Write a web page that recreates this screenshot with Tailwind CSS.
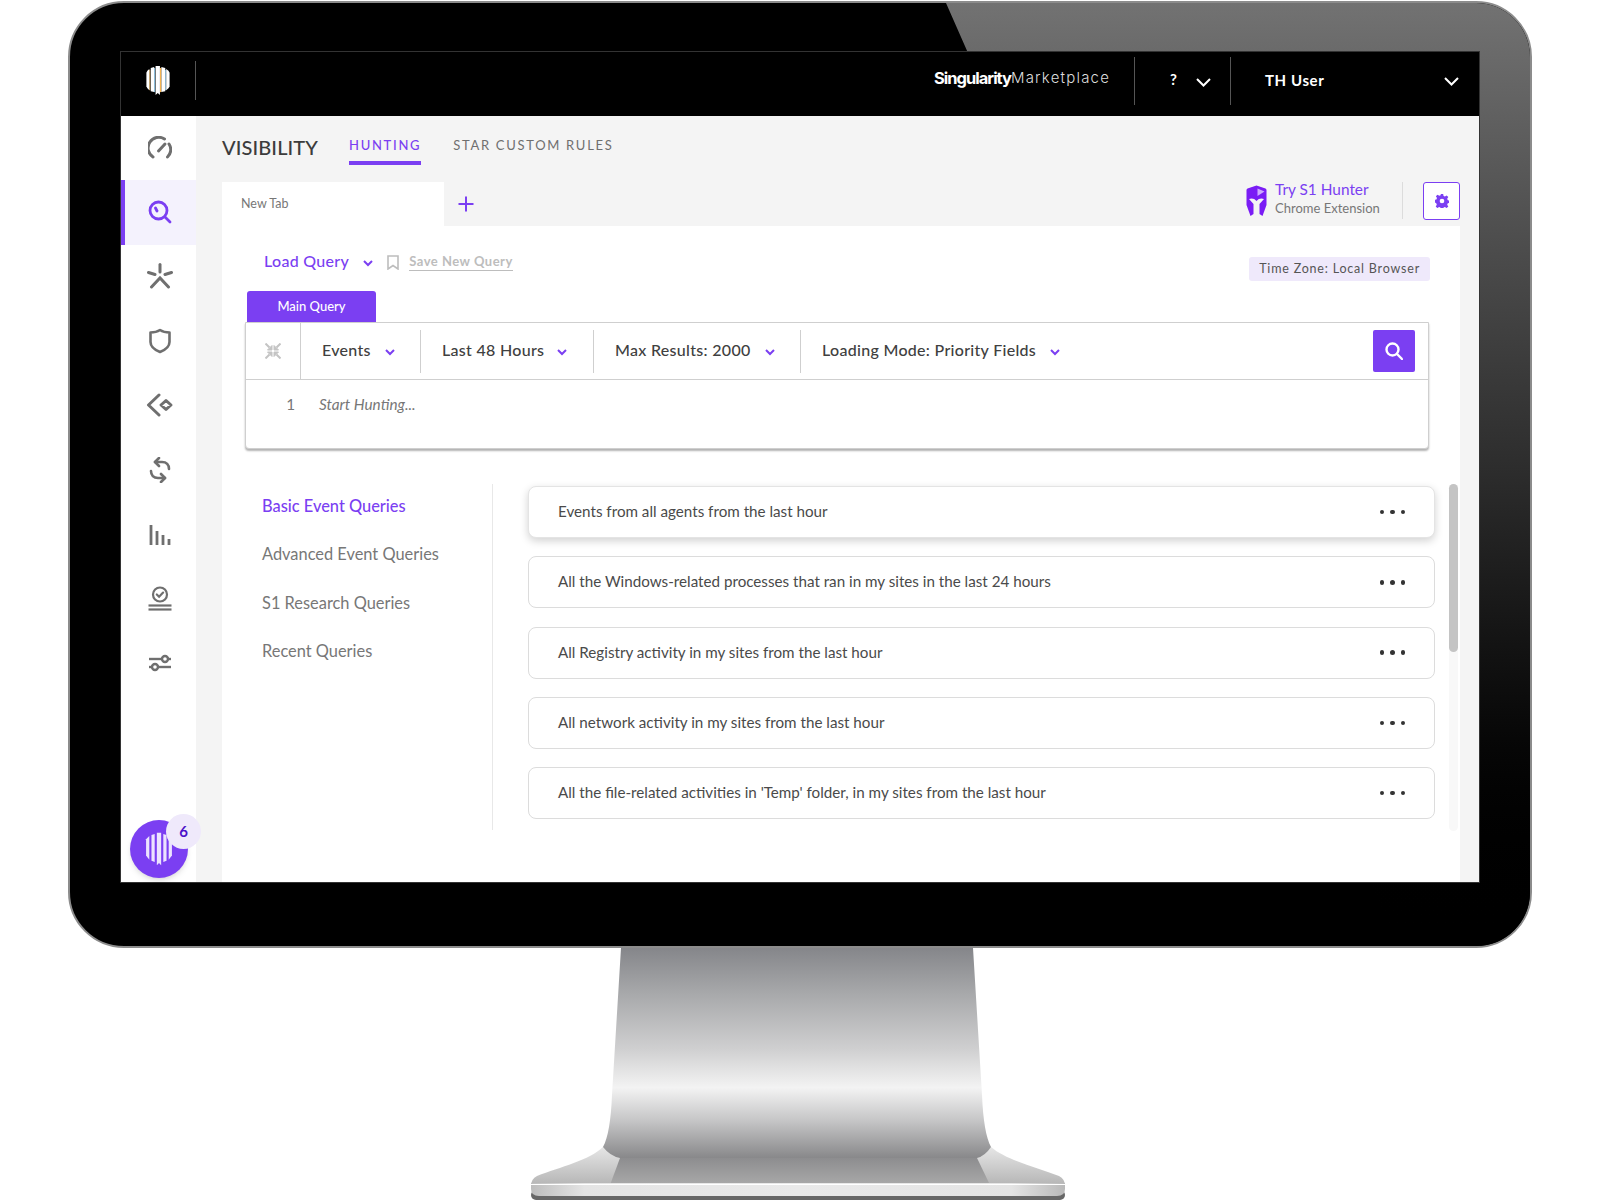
<!DOCTYPE html>
<html lang="en">
<head>
  <meta charset="UTF-8" />
  <title>Singularity Marketplace - Visibility</title>
  <script src="https://cdn.jsdelivr.net/npm/@tailwindcss/browser@4"></script>
</head>
<body class="bg-white w-[1600px] h-[1200px] overflow-hidden font-['Lato',sans-serif] text-[#4a4a4a]">

  <!-- monitor bezel -->
  <div class="relative mt-[1px] ml-[68px] w-[1464px] h-[947px] bg-black rounded-[56px] border-2 border-[#8c8c8c] pt-[49px] pl-[51px] overflow-hidden">
    <div class="absolute top-0 bottom-0 right-0 left-[876px] bg-linear-to-b from-[#727272] via-[#2c2c2c] to-black [clip-path:polygon(0_0,100%_0,100%_100%,450px_100%,425px_880px,22px_50px)]"></div>

    <!-- screen -->
    <div class="relative w-[1358px] h-[830px] flex flex-col outline outline-1 outline-[#333]">

      <!-- top bar -->
      <div class="h-[64px] bg-black flex items-center text-white shrink-0 pb-[6px]">
        <div class="w-[75px] h-[39px] flex items-center justify-center border-r border-[#555] -mt-[1px]">
          <svg width="26" height="29" viewBox="0 0 26 30" fill="#fff">
            <rect x="4" y="4" width="1" height="21" fill="#f5b550"/><rect x="9" y="2" width="1" height="25" fill="#8fd0f5"/><rect x="15" y="2" width="1.500" height="25" fill="#f5b550"/><rect x="20.500" y="4" width="1" height="21" fill="#8fd0f5"/>
            <path d="M1 7 Q1.500 4.500 4 3 V25 Q1.500 23.500 1 21 Z"/><path d="M5.500 2 L9 1 V27 L5.500 26 Z"/><path d="M10.500 0 H15 V30 L12.750 28 L10.500 30 Z"/><path d="M16.500 1 L20.500 2 V26 L16.500 27 Z"/><path d="M21.500 3 Q24.500 4.500 25 7 V21 Q24.500 23.500 21.500 25 Z"/>
          </svg>
        </div>
        <div class="ml-auto flex items-center w-[175px] mr-[25px] -mt-[5px] font-['Inter',sans-serif] whitespace-nowrap">
          <span class="font-bold text-[16.500px] tracking-[-1px]">Singularity</span><span class="font-light text-[15px] tracking-[1.200px] text-[#ddd]">Marketplace</span>
        </div>
        <div class="w-[97px] h-[48px] border-l border-r border-[#555] flex items-center pl-[35px]">
          <span class="font-bold text-[15px] -mt-[4px]">?</span>
          <svg class="ml-[19px] mt-[2px]" width="15" height="9" viewBox="0 0 15 9" fill="none" stroke="#fff" stroke-width="2"><path d="M1 1l6.500 6.500L14 1"/></svg>
        </div>
        <div class="w-[248px] flex items-center pl-[34px] pr-[20px]">
          <span class="font-bold text-[15px] tracking-[0.6px] -mt-[1px]">TH User</span>
          <svg class="ml-auto" width="15" height="9" viewBox="0 0 15 9" fill="none" stroke="#fff" stroke-width="2"><path d="M1 1l6.500 6.500L14 1"/></svg>
        </div>
      </div>

      <div class="flex flex-1 min-h-0">
        <!-- sidebar -->
        <div class="relative w-[75px] bg-white shrink-0">
          <div class="h-[64.400px] flex items-center justify-center pl-[2px]">
            <svg width="24" height="24" viewBox="0 0 24 24" fill="none" stroke="#6f6f6f" stroke-width="3" stroke-linecap="round"><path d="M5 21A10 10 0 0 1 16.500 3"/><path d="M21 8A10 10 0 0 1 19.500 21"/><path d="M10.500 15L17 8"/></svg>
          </div>
          <div class="h-[64.400px] flex items-center justify-center bg-[#f4f2fd] border-l-[4px] border-[#7b3ff2] pr-[2px]">
            <svg class="-mt-[2px]" width="24" height="24" viewBox="0 0 24 24" fill="none" stroke="#7b3ff2" stroke-width="2.800" stroke-linecap="round"><circle cx="10.500" cy="10.500" r="8.500"/><path d="M17 17l5 5"/><path d="M7.500 8l1.500 3"/></svg>
          </div>
          <div class="h-[64.400px] flex items-center justify-center pl-[2px]">
            <svg class="-mt-[1px]" width="26" height="26" viewBox="0 0 26 26" fill="none" stroke="#6f6f6f" stroke-width="3" stroke-linecap="round"><path d="M13 1.500V9"/><path d="M1.500 9.500L8 11.500"/><path d="M24.500 9.500L18 11.500"/><path d="M4.500 24L13 15l8.500 9"/></svg>
          </div>
          <div class="h-[64.400px] flex items-center justify-center pl-[2px]">
            <svg width="24" height="26" viewBox="0 0 24 26" fill="none" stroke="#6f6f6f" stroke-width="2.600" stroke-linejoin="round"><path d="M12 2C9 4 5.500 4.500 2.500 4.500V14c0 4.500 4.500 8 9.500 10 5-2 9.500-5.500 9.500-10V4.500C18.500 4.500 15 4 12 2Z"/></svg>
          </div>
          <div class="h-[64.400px] flex items-center justify-center pl-[2px]">
            <svg class="-mt-[1px]" width="28" height="24" viewBox="0 0 28 24" fill="none" stroke="#6f6f6f" stroke-width="3" stroke-linecap="round" stroke-linejoin="round"><path d="M13 2L2.500 12 13 22"/><path d="M20 7.500l5 4.500-5 4.500-5-4.500z"/></svg>
          </div>
          <div class="h-[64.400px] flex items-center justify-center pl-[2px]">
            <svg class="-mt-[1px]" width="24" height="26" viewBox="0 0 24 26" fill="none" stroke="#6f6f6f" stroke-width="2.600" stroke-linecap="round" stroke-linejoin="round"><path d="M21 12c0-4-2.500-7-7-7H7"/><path d="M11 1L7 5l4 4"/><path d="M3 14c0 4 2.500 7 7 7h7"/><path d="M13 17l4 4-4 4"/></svg>
          </div>
          <div class="h-[64.400px] flex items-center justify-center pl-[2px]">
            <svg width="22" height="22" viewBox="0 0 22 22" fill="none" stroke="#6f6f6f" stroke-width="2.800"><path d="M2 1v20"/><path d="M8 7v14"/><path d="M14 11v10"/><path d="M20 15v6"/></svg>
          </div>
          <div class="h-[64.400px] flex items-center justify-center pl-[2px]">
            <svg width="26" height="26" viewBox="0 0 26 26" fill="none" stroke="#6f6f6f" stroke-width="2.200"><circle cx="13" cy="8.500" r="7"/><path d="M9.800 8.500l2.300 2.300 4-4.200" stroke-linecap="round"/><path d="M1.500 19.500h23"/><path d="M1.500 23.500h23"/></svg>
          </div>
          <div class="h-[64.400px] flex items-center justify-center pl-[2px]">
            <svg width="24" height="20" viewBox="0 0 24 20" fill="none" stroke="#6f6f6f" stroke-width="2.400"><path d="M1 6h13"/><path d="M20 6h3"/><circle cx="17" cy="6" r="3"/><path d="M1 14h3"/><path d="M10 14h13"/><circle cx="7" cy="14" r="3"/></svg>
          </div>

          <!-- assistant bubble -->
          <div class="absolute left-[9px] top-[704px] w-[58px] h-[58px] rounded-full bg-[#7b3ff2] flex items-center justify-center shadow-md">
            <svg width="28" height="34" viewBox="0 0 26 30" fill="#ece3ff">
              <path d="M1 6 L4 3 V25 L1 21 Z"/><path d="M6 2 L9 1 V27 L6 26 Z"/><path d="M11 0 H15 V30 L13 28 L11 30 Z"/><path d="M17 1 L20 2 V26 L17 27 Z"/><path d="M22 3 L25 6 V21 L22 25 Z"/>
            </svg>
          </div>
          <div class="absolute left-[45px] top-[698px] w-[35px] h-[35px] rounded-full bg-[#efe9fb] flex items-center justify-center text-[#4b12c9] font-bold text-[15px]">6</div>
        </div>

        <!-- main -->
        <div class="flex-1 bg-[#f4f4f4] pl-[26px] pr-[19px] flex flex-col min-w-0">
          <div class="h-[66px] flex items-start shrink-0">
            <div class="pt-[17px] text-[20px] leading-[28px] font-medium text-[#3c3c3c] tracking-[0.1px]">VISIBILITY</div>
            <div class="ml-[31px] pt-[20px] pb-[7px] border-b-4 border-[#7b3ff2] text-[13px] leading-[18px] font-medium tracking-[1.700px] text-[#7b3ff2]">HUNTING</div>
            <div class="ml-[32px] pt-[20px] text-[13px] leading-[18px] tracking-[1.700px] text-[#6f6f6f]">STAR CUSTOM RULES</div>
          </div>

          <div class="h-[44px] flex shrink-0">
            <div class="w-[222px] bg-white flex items-center pl-[19px] text-[12.500px] text-[#777]">New Tab</div>
            <svg class="ml-[14px] mt-[14px]" width="16" height="16" viewBox="0 0 16 16" fill="none" stroke="#7b3ff2" stroke-width="2"><path d="M8 0.500v15"/><path d="M0.500 8h15"/></svg>
            <div class="ml-auto flex items-start">
              <svg class="mt-[3px]" width="23" height="31" viewBox="0 0 20 31">
                <path fill="#7a1cf5" d="M10 0.500L1 3.500Q0 4 0 5V20L4 31 7 29V19L2.500 14Q7 12.500 10 16 13 12.500 17.500 14L13 19V29L16 31 20 20V5Q20 4 19 3.500Z"/>
                <path fill="#cda9ff" d="M11 3.500L18 6.500 11 11Z"/>
              </svg>
              <div class="ml-[7px] w-[127px] -mt-[3px]">
                <div class="text-[15.400px] leading-[19px] text-[#7b3ff2] pt-[1px]">Try S1 Hunter</div>
                <div class="text-[13px] leading-[17px] text-[#777] pt-[1px] whitespace-nowrap">Chrome Extension</div>
              </div>
              <div class="w-px h-[37px] bg-[#dcdcdc]"></div>
              <div class="ml-[20px] w-[37px] h-[38px] bg-white border border-[#7b3ff2] rounded-[3px] flex items-center justify-center">
                <svg width="14" height="14" viewBox="0 0 24 24" fill="#7b3ff2"><path fill-rule="evenodd" d="M10 0h4l.7 3.400 2.300 1 3-1.900 2.800 2.800-1.900 3 1 2.300 3.400.7v4l-3.400.7-1 2.300 1.900 3-2.800 2.800-3-1.900-2.300 1-.7 3.400h-4l-.7-3.400-2.300-1-3 1.900-2.800-2.800 1.900-3-1-2.300L-1 14v-4l3.400-.7 1-2.300-1.900-3L4.300 1.200l3 1.900 2.300-1zM12 8a4 4 0 1 0 0 8 4 4 0 0 0 0-8z"/></svg>
              </div>
            </div>
          </div>

          <!-- panel -->
          <div class="flex-1 bg-white min-h-0">
            <div class="h-[65px] flex items-start pl-[42px] pr-[30px]">
              <div class="mt-[24px] flex items-center h-[22px]">
                <span class="text-[16px] font-medium tracking-[0.3px] text-[#7b3ff2]">Load Query</span>
                <svg class="ml-[14px] mt-[4px]" width="10" height="7" viewBox="0 0 10 7" fill="none" stroke="#7b3ff2" stroke-width="2"><path d="M1 1l4 4 4-4"/></svg>
                <svg class="ml-[14px] mt-[2px]" width="12" height="15" viewBox="0 0 12 15" fill="none" stroke="#bdbdbd" stroke-width="1.600"><path d="M1 1h10v13l-5-3.500L1 14z"/></svg>
                <span class="ml-[10px] mt-[1px] text-[13px] font-bold tracking-[0.5px] text-[#bdbdbd] border-b border-[#bdbdbd] leading-[17px]">Save New Query</span>
              </div>
              <div class="ml-auto mt-[31px] h-[24px] px-[10px] flex items-center rounded-[3px] bg-[#efe9fb] text-[12.500px] tracking-[0.8px] text-[#555]">Time Zone: Local Browser</div>
            </div>

            <div class="ml-[25px] w-[129px] h-[31px] bg-[#7b3ff2] rounded-t-[3px] flex items-center justify-center text-white text-[13px] font-medium">Main Query</div>
            <div class="ml-[23px] w-[1184px] h-[127px] border border-[#cfcfcf] rounded-b-[4px] shadow-[0_2px_2px_rgba(0,0,0,0.3)] bg-white">
              <div class="h-[57px] flex items-center border-b border-[#cfcfcf] text-[16px] font-medium text-[#404040] tracking-[0.3px]">
                <div class="w-[55px] h-full flex items-center justify-center border-r border-[#cfcfcf]">
                  <svg width="16" height="16" viewBox="0 0 16 16" fill="#c4c4c4" stroke="#c4c4c4"><path d="M7 7H2.500L7 2.500Z"/><path d="M9 7h4.500L9 2.500Z"/><path d="M7 9H2.500L7 13.500Z"/><path d="M9 9h4.500L9 13.500Z"/><path stroke-width="2" d="M0.500 0.500l4 4M15.500 0.500l-4 4M0.500 15.500l4-4M15.500 15.500l-4-4"/></svg>
                </div>
                <div class="w-[120px] h-[43px] flex items-center border-r border-[#cfcfcf] pl-[21px] pb-[2px]">Events
                  <svg class="ml-[14px] mt-[5px]" width="10" height="7" viewBox="0 0 10 7" fill="none" stroke="#7b3ff2" stroke-width="2"><path d="M1 1l4 4 4-4"/></svg>
                </div>
                <div class="w-[173px] h-[43px] flex items-center border-r border-[#cfcfcf] pl-[21px] pb-[2px]">Last 48 Hours
                  <svg class="ml-[13px] mt-[5px]" width="10" height="7" viewBox="0 0 10 7" fill="none" stroke="#7b3ff2" stroke-width="2"><path d="M1 1l4 4 4-4"/></svg>
                </div>
                <div class="w-[207px] h-[43px] flex items-center border-r border-[#cfcfcf] pl-[21px] pb-[2px]">Max Results: 2000
                  <svg class="ml-[14px] mt-[5px]" width="10" height="7" viewBox="0 0 10 7" fill="none" stroke="#7b3ff2" stroke-width="2"><path d="M1 1l4 4 4-4"/></svg>
                </div>
                <div class="h-[43px] flex items-center pl-[21px] pb-[2px]">Loading Mode: Priority Fields
                  <svg class="ml-[14px] mt-[5px]" width="10" height="7" viewBox="0 0 10 7" fill="none" stroke="#7b3ff2" stroke-width="2"><path d="M1 1l4 4 4-4"/></svg>
                </div>
                <div class="ml-auto mr-[13px] w-[42px] h-[42px] rounded-[2px] bg-[#7b3ff2] flex items-center justify-center">
                  <svg width="18" height="18" viewBox="0 0 18 18" fill="none" stroke="#fff" stroke-width="2.400"><circle cx="7.500" cy="7.500" r="6"/><path d="M12 12l5 5" stroke-linecap="round"/></svg>
                </div>
              </div>
              <div class="flex items-center pt-[13px] text-[15.300px]">
                <span class="w-[73px] pr-[24px] text-right text-[#777]">1</span>
                <span class="italic text-[#777]">Start Hunting...</span>
              </div>
            </div>

            <div class="mt-[35px] flex">
              <div class="ml-[40px] w-[231px] h-[346px] border-r border-[#e8e8e8] pt-[10px] flex flex-col gap-[24.400px] text-[16.400px] leading-[24px] text-[#777]">
                <div class="font-medium text-[#7b3ff2]">Basic Event Queries</div>
                <div>Advanced Event Queries</div>
                <div>S1 Research Queries</div>
                <div>Recent Queries</div>
              </div>

              <div class="ml-[35px] w-[907px] pt-[2px] flex flex-col gap-[18.300px] text-[15.200px] text-[#4a4a4a]">
                <div class="h-[52px] rounded-[8px] border border-[#e4e4e4] bg-white shadow-[0_3px_8px_rgba(0,0,0,0.18)] flex items-center pl-[29px] pr-[29px]">
                  <span class="-mt-[2px]">Events from all agents from the last hour</span>
                  <div class="ml-auto flex gap-[6px]"><i class="w-[4.500px] h-[4.500px] rounded-full bg-[#333]"></i><i class="w-[4.500px] h-[4.500px] rounded-full bg-[#333]"></i><i class="w-[4.500px] h-[4.500px] rounded-full bg-[#333]"></i></div>
                </div>
                <div class="h-[52px] rounded-[8px] border border-[#dcdcdc] bg-white flex items-center pl-[29px] pr-[29px]">
                  <span class="-mt-[2px]">All the Windows-related processes that ran in my sites in the last 24 hours</span>
                  <div class="ml-auto flex gap-[6px]"><i class="w-[4.500px] h-[4.500px] rounded-full bg-[#333]"></i><i class="w-[4.500px] h-[4.500px] rounded-full bg-[#333]"></i><i class="w-[4.500px] h-[4.500px] rounded-full bg-[#333]"></i></div>
                </div>
                <div class="h-[52px] rounded-[8px] border border-[#dcdcdc] bg-white flex items-center pl-[29px] pr-[29px]">
                  <span class="-mt-[1px]">All Registry activity in my sites from the last hour</span>
                  <div class="ml-auto flex gap-[6px]"><i class="w-[4.500px] h-[4.500px] rounded-full bg-[#333]"></i><i class="w-[4.500px] h-[4.500px] rounded-full bg-[#333]"></i><i class="w-[4.500px] h-[4.500px] rounded-full bg-[#333]"></i></div>
                </div>
                <div class="h-[52px] rounded-[8px] border border-[#dcdcdc] bg-white flex items-center pl-[29px] pr-[29px]">
                  <span class="-mt-[1px]">All network activity in my sites from the last hour</span>
                  <div class="ml-auto flex gap-[6px]"><i class="w-[4.500px] h-[4.500px] rounded-full bg-[#333]"></i><i class="w-[4.500px] h-[4.500px] rounded-full bg-[#333]"></i><i class="w-[4.500px] h-[4.500px] rounded-full bg-[#333]"></i></div>
                </div>
                <div class="h-[52px] rounded-[8px] border border-[#dcdcdc] bg-white flex items-center pl-[29px] pr-[29px]">
                  <span class="-mt-[2px]">All the file-related activities in 'Temp' folder, in my sites from the last hour</span>
                  <div class="ml-auto flex gap-[6px]"><i class="w-[4.500px] h-[4.500px] rounded-full bg-[#333]"></i><i class="w-[4.500px] h-[4.500px] rounded-full bg-[#333]"></i><i class="w-[4.500px] h-[4.500px] rounded-full bg-[#333]"></i></div>
                </div>
              </div>

              <div class="ml-[14px] w-[9px] h-[347px] rounded-full bg-[#f8f8f8]">
                <div class="h-[168px] rounded-full bg-[#c4c4c4]"></div>
              </div>
            </div>
          </div>
        </div>
      </div>
    </div>
  </div>

  <!-- stand -->
  <svg class="block" width="1600" height="252" viewBox="0 948 1600 252">
    <defs>
      <linearGradient id="neck" x1="0" y1="0" x2="0" y2="1">
        <stop offset="0" stop-color="#85868a"/>
        <stop offset="0.22" stop-color="#a8a9ab"/>
        <stop offset="0.48" stop-color="#cfcfd0"/>
        <stop offset="0.665" stop-color="#f3f3f3"/>
        <stop offset="0.82" stop-color="#c6c6c7"/>
        <stop offset="1" stop-color="#88888a"/>
      </linearGradient>
      <linearGradient id="foot" x1="0" y1="0" x2="0" y2="1">
        <stop offset="0" stop-color="#e6e6e6"/>
        <stop offset="1" stop-color="#b4b4b4"/>
      </linearGradient>
      <linearGradient id="inner" x1="0" y1="0" x2="0" y2="1">
        <stop offset="0" stop-color="#8d8d8f"/>
        <stop offset="1" stop-color="#a9a9a9"/>
      </linearGradient>
      <linearGradient id="plate" x1="0" y1="0" x2="1" y2="0">
        <stop offset="0" stop-color="#bdbdbd"/>
        <stop offset="0.1" stop-color="#e4e4e4"/>
        <stop offset="0.5" stop-color="#e9e9e9"/>
        <stop offset="0.9" stop-color="#e4e4e4"/>
        <stop offset="1" stop-color="#b9b9b9"/>
      </linearGradient>
    </defs>
    <path d="M603 1147C590 1160 560 1167 537 1176Q531 1179 531 1186H1065Q1065 1179 1059 1176C1036 1167 1006 1160 991 1147Z" fill="url(#foot)"/>
    <path d="M620 1158H977L990 1185H610Z" fill="url(#inner)"/>
    <path d="M621 948L612 1095C611 1120 608 1138 603 1147Q610 1156 620 1158H977Q985 1156 991 1147C986 1138 983 1120 982 1095L973 948Z" fill="url(#neck)"/>
    <rect x="531" y="1190" width="534" height="10" rx="5" fill="#676767"/>
    <path d="M531 1183H1065V1189Q1065 1196 1057 1196H539Q531 1196 531 1189Z" fill="url(#plate)"/>
    <path d="M531 1184.500H1065" stroke="#fff" stroke-width="1.200"/>
  </svg>

</body>
</html>
